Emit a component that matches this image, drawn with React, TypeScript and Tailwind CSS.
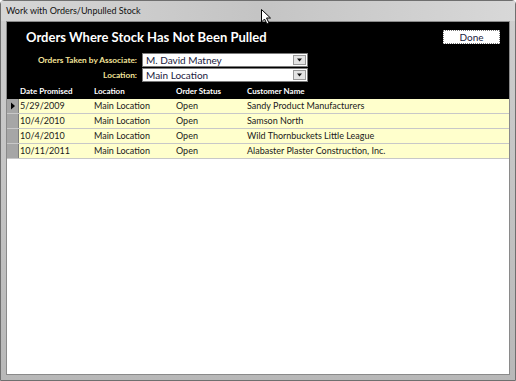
import React from 'react';

const rows = [
  { date: '5/29/2009', location: 'Main Location', status: 'Open', customer: 'Sandy Product Manufacturers' },
  { date: '10/4/2010', location: 'Main Location', status: 'Open', customer: 'Samson North' },
  { date: '10/4/2010', location: 'Main Location', status: 'Open', customer: 'Wild Thornbuckets Little League' },
  { date: '10/11/2011', location: 'Main Location', status: 'Open', customer: 'Alabaster Plaster Construction, Inc.' },
];

function Combo({ value }: { value: string }) {
  return (
    <div className="w-[166px] h-[14px] bg-white border border-[#7a7a7a] flex items-center">
      <span className="flex-1 pl-[3px] text-[10px] leading-none text-[#1a1a40]">{value}</span>
      <div className="w-[13px] h-[10px] mr-[1px] bg-[#e4e4e4] border border-[#9a9a9a] flex items-center justify-center">
        <svg width="7" height="4" viewBox="0 0 7 4">
          <path d="M1 0.5h5L3.5 3.5z" fill="#111" />
        </svg>
      </div>
    </div>
  );
}

export default function App() {
  return (
    <div
      className="relative w-[516px] h-[381px] bg-gradient-to-b from-[#cfcfcf] to-[#b8b8b8] flex flex-col border border-[#6f6f6f] rounded-t-[4px]"
      style={{ fontFamily: 'Lato, "Open Sans", sans-serif' }}
    >
      {/* title bar */}
      <div className="h-[20px] flex items-center pl-[5px] bg-gradient-to-r from-[#d6d6d6] via-[#c4c4c4] to-[#d8d8d8]">
        <span className="text-[9px] text-[#111]">Work with Orders/Unpulled Stock</span>
      </div>

      <div className="flex-1 mx-[5px] mb-[5px] border border-[#8a8a8a] bg-white flex flex-col">
        {/* black form header */}
        <div className="bg-black">
          <div className="flex items-center justify-between pl-[19px] pr-[9px] pt-[8px]">
            <h1 className="text-[13px] font-bold text-white leading-none">Orders Where Stock Has Not Been Pulled</h1>
            <button className="w-[57px] h-[14px] bg-white border border-dotted border-[#777] text-[10px] leading-none text-[#1a1a40]">
              Done
            </button>
          </div>
          <div className="mt-[9px] flex flex-col gap-[1px]">
            <div className="flex items-center">
              <span className="w-[135px] text-right pr-[5px] text-[8.3px] font-bold text-[#f3e39a]">Orders Taken by Associate:</span>
              <Combo value="M. David Matney" />
            </div>
            <div className="flex items-center">
              <span className="w-[135px] text-right pr-[5px] text-[8.3px] font-bold text-[#f3e39a]">Location:</span>
              <Combo value="Main Location" />
            </div>
          </div>
          <div className="flex h-[17px] items-center text-[8px] font-bold text-white pl-[13px]">
            <span className="w-[74px]">Date Promised</span>
            <span className="w-[82px]">Location</span>
            <span className="w-[71px]">Order Status</span>
            <span>Customer Name</span>
          </div>
        </div>

        {/* datasheet rows */}
        <div className="flex flex-col">
          {rows.map((r, i) => (
            <div key={i} className="flex h-[15px] border-b border-[#c8c8c8]">
              <div className="w-[12px] bg-[#a6a6a6] border-r border-[#7d7d7d] flex items-center justify-center">
                {i === 0 && (
                  <svg width="6" height="8" viewBox="0 0 6 8">
                    <path d="M1 0.5L5 4L1 7.5z" fill="#000" />
                  </svg>
                )}
              </div>
              <div className="flex-1 bg-[#ffffcc] flex items-center text-[9px] text-[#1a1a1a] pl-[1px]">
                <span className="w-[74px]">{r.date}</span>
                <span className="w-[82px]">{r.location}</span>
                <span className="w-[71px]">{r.status}</span>
                <span>{r.customer}</span>
              </div>
            </div>
          ))}
        </div>
        <div className="flex-1 bg-white" />
      </div>

      {/* mouse pointer */}
      <svg className="absolute left-[260px] top-[8px]" width="10" height="16" viewBox="0 0 10 16">
        <path d="M0.5 0.5V13L3.5 10L6 15L8 14L5.5 9H9.5Z" fill="#fff" stroke="#000" strokeWidth="1" />
      </svg>
    </div>
  );
}
